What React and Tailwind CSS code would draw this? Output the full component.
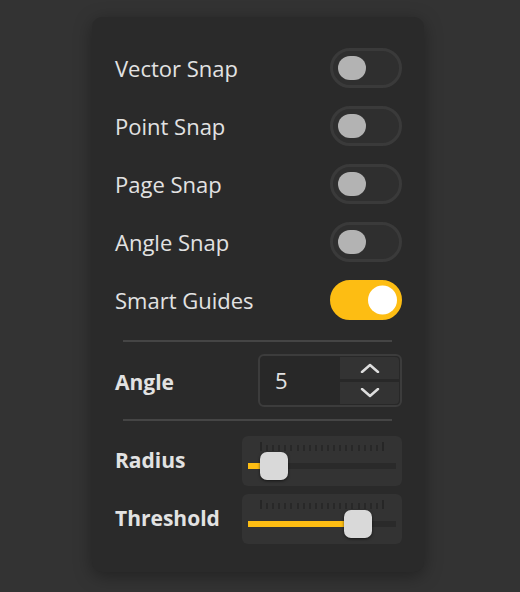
import { useState } from 'react';

const font = { fontFamily: '"Open Sans", "Noto Sans", sans-serif' };

const Toggle = ({ on, onClick }) => (
  <button
    onClick={onClick}
    className={
      on
        ? 'relative w-[72px] h-[40px] rounded-full bg-[#fdbd13] border-[3px] border-[#fdbd13]'
        : 'relative w-[72px] h-[40px] rounded-full bg-[#2f2f2f] border-[3px] border-[#3a3a3a]'
    }
  >
    {on ? (
      <span className="absolute right-[2px] top-1/2 -translate-y-1/2 w-[29px] h-[29px] rounded-full bg-white" />
    ) : (
      <span className="absolute left-[5px] top-1/2 -translate-y-1/2 w-[28px] h-[24px] rounded-full bg-[#b3b3b3]" />
    )}
  </button>
);

const Slider = ({ knobLeft }) => (
  <div className="relative w-[160px] h-[50px] rounded-md bg-[#333333]">
    {/* ticks */}
    <div className="absolute left-[18px] top-[6px] w-[124px] h-[9px] flex justify-between items-end">
      {Array.from({ length: 21 }).map((_, i) => (
        <span
          key={i}
          className={i === 0 || i === 20 ? 'w-[2px] h-[9px] bg-[#262626]' : 'w-[2px] h-[6px] bg-[#282828]'}
        />
      ))}
    </div>
    {/* track */}
    <div className="absolute left-[6px] right-[6px] top-[27px] h-[6px] bg-[#2a2a2a]" />
    <div className="absolute left-[6px] top-[27px] h-[6px] bg-[#fdbd13]" style={{ width: knobLeft + 4 }} />
    {/* knob */}
    <div
      className="absolute top-[16px] w-[28px] h-[28px] rounded-[7px] bg-[#d9d9d9] shadow-[0_1px_3px_rgba(0,0,0,0.6)]"
      style={{ left: knobLeft }}
    />
  </div>
);

const App = () => {
  const [snaps, setSnaps] = useState({
    'Vector Snap': false,
    'Point Snap': false,
    'Page Snap': false,
    'Angle Snap': false,
    'Smart Guides': true,
  });
  const [angle, setAngle] = useState(5);

  return (
    <div className="min-h-screen bg-[#333333] pt-[17px] pl-[92px]" style={font}>
      <div className="w-[332px] h-[555px] rounded-[10px] bg-[#2a2a2a] shadow-[0_4px_18px_rgba(0,0,0,0.35)] pt-[22px] pl-[23px] pr-[22px]">
        {Object.keys(snaps).map((name) => (
          <div key={name} className="h-[58px] flex items-center justify-between">
            <span className="text-[22px] text-[#e2e2e2]">{name}</span>
            <Toggle on={snaps[name]} onClick={() => setSnaps({ ...snaps, [name]: !snaps[name] })} />
          </div>
        ))}

        <div className="mt-[11px] ml-[8px] w-[269px] h-[2px] bg-[#454545]" />

        {/* Angle */}
        <div className="mt-[12px] h-[53px] flex items-center justify-between">
          <span className="text-[21px] font-bold text-[#e2e2e2] mt-[5px]">Angle</span>
          <div className="w-[144px] h-[53px] rounded-[6px] border-2 border-[#3c3c3c] bg-[#282828] flex">
            <div className="flex-1 flex items-center pl-[15px] text-[22px] text-[#e2e2e2]">{angle}</div>
            <div className="w-[60px] flex flex-col gap-[3px] py-[1px] pr-[1px]">
              <button
                onClick={() => setAngle(angle + 1)}
                className="h-[23px] bg-[#333333] rounded-tr-[4px] flex items-center justify-center"
              >
                <svg width="20" height="10" viewBox="0 0 20 10" fill="none">
                  <path d="M2 9 L10 2 L18 9" stroke="#dedede" strokeWidth="2.5" strokeLinecap="round" strokeLinejoin="round" />
                </svg>
              </button>
              <button
                onClick={() => setAngle(angle - 1)}
                className="h-[23px] bg-[#333333] rounded-br-[4px] flex items-center justify-center"
              >
                <svg width="20" height="10" viewBox="0 0 20 10" fill="none">
                  <path d="M2 1 L10 8 L18 1" stroke="#dedede" strokeWidth="2.5" strokeLinecap="round" strokeLinejoin="round" />
                </svg>
              </button>
            </div>
          </div>
        </div>

        <div className="mt-[12px] ml-[8px] w-[269px] h-[2px] bg-[#454545]" />

        {/* Sliders */}
        <div className="mt-[15px] flex flex-col gap-[8px]">
          <div className="flex items-center justify-between">
            <span className="text-[21px] font-bold text-[#e2e2e2]">Radius</span>
            <Slider knobLeft={18} />
          </div>
          <div className="flex items-center justify-between">
            <span className="text-[21px] font-bold text-[#e2e2e2]">Threshold</span>
            <Slider knobLeft={102} />
          </div>
        </div>
      </div>
    </div>
  );
};

export default App;
